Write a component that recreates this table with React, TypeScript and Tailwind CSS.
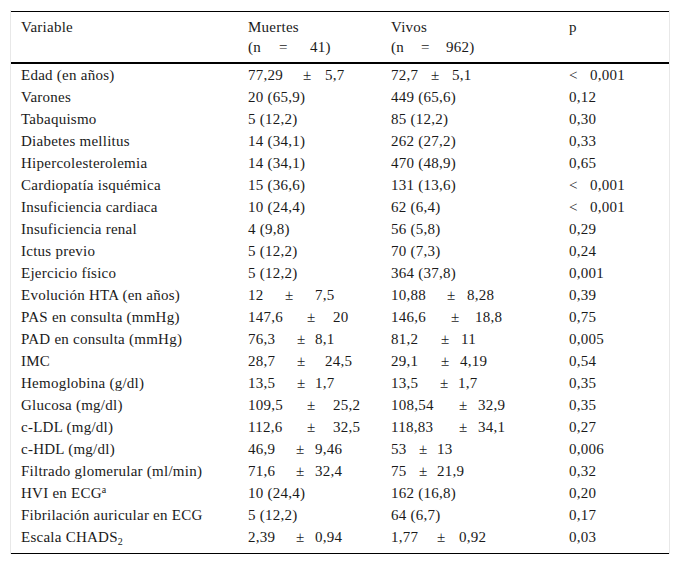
type Pm = { a: string; b: string; wa: string; wb: string };
type Row = { v: React.ReactNode; m: string | Pm; s: string | Pm; p: string };

function PlusMinus({ a, b, wa, wb }: Pm) {
  return (
    <span className="whitespace-nowrap">
      <span className={`inline-block ${wa}`}>{a}</span>
      <span className={`inline-block ${wb}`}>±</span>
      <span>{b}</span>
    </span>
  );
}

function Cell({ value }: { value: string | Pm }) {
  if (typeof value === "string") return <>{value}</>;
  return <PlusMinus {...value} />;
}

function PValue({ p }: { p: string }) {
  if (p.startsWith("<")) {
    return (
      <span className="whitespace-nowrap">
        <span className="inline-block w-[21px]">&lt;</span>
        {p.slice(1).trim()}
      </span>
    );
  }
  return <>{p}</>;
}

const rows: Row[] = [
  { v: "Edad (en años)", m: { a: "77,29", b: "5,7", wa: "w-[55px]", wb: "w-[22px]" }, s: { a: "72,7", b: "5,1", wa: "w-[40px]", wb: "w-[21px]" }, p: "< 0,001" },
  { v: "Varones", m: "20 (65,9)", s: "449 (65,6)", p: "0,12" },
  { v: "Tabaquismo", m: "5 (12,2)", s: "85 (12,2)", p: "0,30" },
  { v: "Diabetes mellitus", m: "14 (34,1)", s: "262 (27,2)", p: "0,33" },
  { v: "Hipercolesterolemia", m: "14 (34,1)", s: "470 (48,9)", p: "0,65" },
  { v: "Cardiopatía isquémica", m: "15 (36,6)", s: "131 (13,6)", p: "< 0,001" },
  { v: "Insuficiencia cardiaca", m: "10 (24,4)", s: "62 (6,4)", p: "< 0,001" },
  { v: "Insuficiencia renal", m: "4 (9,8)", s: "56 (5,8)", p: "0,29" },
  { v: "Ictus previo", m: "5 (12,2)", s: "70 (7,3)", p: "0,24" },
  { v: "Ejercicio físico", m: "5 (12,2)", s: "364 (37,8)", p: "0,001" },
  { v: "Evolución HTA (en años)", m: { a: "12", b: "7,5", wa: "w-[37px]", wb: "w-[30px]" }, s: { a: "10,88", b: "8,28", wa: "w-[56px]", wb: "w-[20px]" }, p: "0,39" },
  { v: "PAS en consulta (mmHg)", m: { a: "147,6", b: "20", wa: "w-[59px]", wb: "w-[26px]" }, s: { a: "146,6", b: "18,8", wa: "w-[60px]", wb: "w-[24px]" }, p: "0,75" },
  { v: "PAD en consulta (mmHg)", m: { a: "76,3", b: "8,1", wa: "w-[49px]", wb: "w-[18px]" }, s: { a: "81,2", b: "11", wa: "w-[50px]", wb: "w-[20px]" }, p: "0,005" },
  { v: "IMC", m: { a: "28,7", b: "24,5", wa: "w-[49px]", wb: "w-[28px]" }, s: { a: "29,1", b: "4,19", wa: "w-[50px]", wb: "w-[19px]" }, p: "0,54" },
  { v: "Hemoglobina (g/dl)", m: { a: "13,5", b: "1,7", wa: "w-[49px]", wb: "w-[18px]" }, s: { a: "13,5", b: "1,7", wa: "w-[49px]", wb: "w-[18px]" }, p: "0,35" },
  { v: "Glucosa (mg/dl)", m: { a: "109,5", b: "25,2", wa: "w-[59px]", wb: "w-[26px]" }, s: { a: "108,54", b: "32,9", wa: "w-[68px]", wb: "w-[19px]" }, p: "0,35" },
  { v: "c-LDL (mg/dl)", m: { a: "112,6", b: "32,5", wa: "w-[59px]", wb: "w-[26px]" }, s: { a: "118,83", b: "34,1", wa: "w-[68px]", wb: "w-[19px]" }, p: "0,27" },
  { v: "c-HDL (mg/dl)", m: { a: "46,9", b: "9,46", wa: "w-[48px]", wb: "w-[19px]" }, s: { a: "53", b: "13", wa: "w-[28px]", wb: "w-[18px]" }, p: "0,006" },
  { v: "Filtrado glomerular (ml/min)", m: { a: "71,6", b: "32,4", wa: "w-[48px]", wb: "w-[19px]" }, s: { a: "75", b: "21,9", wa: "w-[28px]", wb: "w-[18px]" }, p: "0,32" },
  { v: <>HVI en ECG<sup className="text-[10px]">a</sup></>, m: "10 (24,4)", s: "162 (16,8)", p: "0,20" },
  { v: "Fibrilación auricular en ECG", m: "5 (12,2)", s: "64 (6,7)", p: "0,17" },
  { v: <>Escala CHADS<sub className="text-[10px]">2</sub></>, m: { a: "2,39", b: "0,94", wa: "w-[48px]", wb: "w-[19px]" }, s: { a: "1,77", b: "0,92", wa: "w-[46px]", wb: "w-[22px]" }, p: "0,03" },
];

const grid = "grid grid-cols-[227px_143px_178px_110px]";

export default function App() {
  return (
    <div className="min-h-[565px] w-[680px] bg-white pt-[10px] font-['Liberation_Serif','Times_New_Roman',serif] text-[15px] tracking-[0.25px] text-[#1a1a1a]">
      <div className="ml-[10px] w-[660px] border-x border-[#e8e8e8] pt-[1px]">
        <div className="border-t border-b border-black">
          <div className={`${grid} border-b-2 border-black py-[5px] leading-[20px]`}>
            <div className="pl-[10px]">Variable</div>
            <div className="pl-[10px]">
              <div>Muertes</div>
              <div className="whitespace-nowrap">
                <span className="inline-block w-[31px]">(n</span>
                <span className="inline-block w-[31px]">=</span>
                41)
              </div>
            </div>
            <div className="pl-[10px]">
              <div>Vivos</div>
              <div className="whitespace-nowrap">
                <span className="inline-block w-[30px]">(n</span>
                <span className="inline-block w-[25px]">=</span>
                962)
              </div>
            </div>
            <div className="pl-[10px]">p</div>
          </div>
          <div className="pb-[5px]">
            {rows.map((r, i) => (
              <div key={i} className={`${grid} h-[22px] items-center leading-[20px] whitespace-nowrap`}>
                <div className="pl-[10px]">{r.v}</div>
                <div className="pl-[10px]"><Cell value={r.m} /></div>
                <div className="pl-[10px]"><Cell value={r.s} /></div>
                <div className="pl-[10px]"><PValue p={r.p} /></div>
              </div>
            ))}
          </div>
        </div>
      </div>
    </div>
  );
}
